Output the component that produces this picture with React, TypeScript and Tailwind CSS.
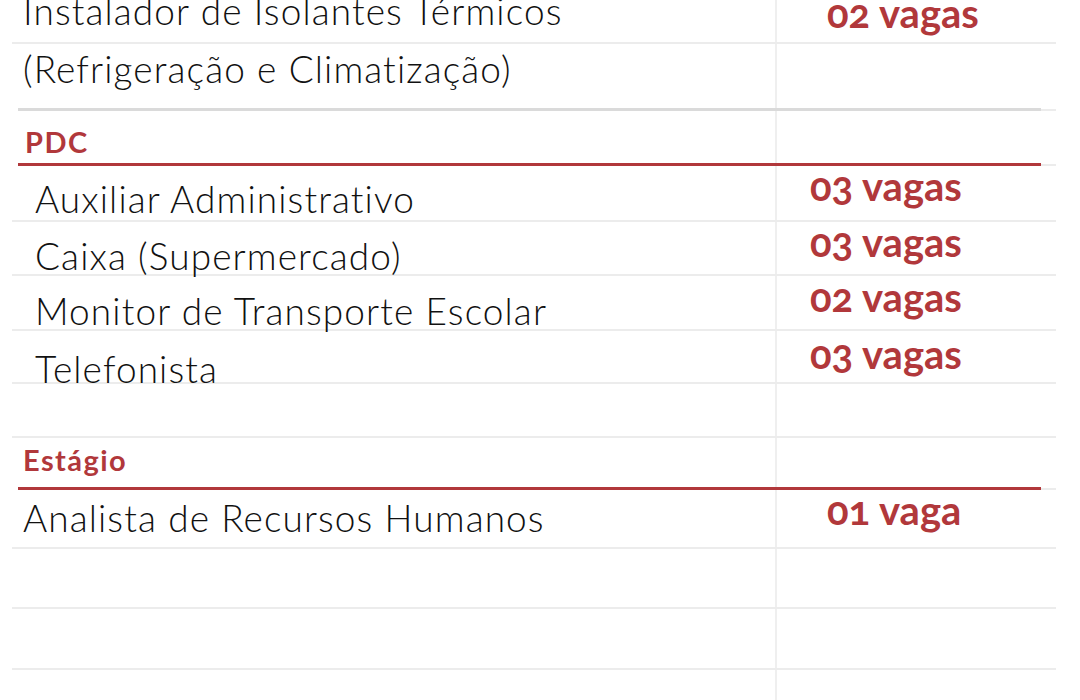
const RED = 'text-[#b1383b]';

interface RowProps {
  h: string;
  children?: React.ReactNode;
  right?: React.ReactNode;
  last?: boolean;
}

function Row({ h, children, right, last }: RowProps) {
  return (
    <div className={`flex ${h} ${last ? '' : 'border-b-2 border-[#ececec]'}`}>
      <div className="w-[763px]">{children}</div>
      <div className="flex-1 border-l-2 border-[#efefef]">{right}</div>
    </div>
  );
}

function Rule({ red }: { red?: boolean }) {
  return (
    <div className="flex h-[3px] items-center">
      <div className={`ml-[6px] h-[3px] w-[1023px] ${red ? 'bg-[#b1383b]' : 'bg-[#dadada]'}`} />
      <div className="h-[2px] flex-1 bg-[#ececec]" />
    </div>
  );
}

function Job({ text, pt, pl }: { text: string; pt: string; pl: string }) {
  return (
    <p className={`${pt} ${pl} text-[37px] leading-none font-light tracking-[0.03em] whitespace-nowrap text-[#111]`}>
      {text}
    </p>
  );
}

function Vagas({ text, pt, pl }: { text: string; pt: string; pl: string }) {
  return (
    <p className={`${pt} ${pl} text-[40px] leading-none font-bold oldstyle-nums whitespace-nowrap ${RED}`}>
      {text}
    </p>
  );
}

function Heading({ text, pt, pl }: { text: string; pt: string; pl: string }) {
  return (
    <p className={`${pt} ${pl} text-[29px] leading-none font-bold tracking-[0.05em] ${RED}`}>{text}</p>
  );
}

export default function App() {
  return (
    <div className="h-[700px] w-[1080px] overflow-hidden bg-white font-['Lato',sans-serif]">
      <div className="-mt-[10px] ml-[12px] w-[1044px]">
        <Row h="h-[54px]" right={<Vagas text="02 vagas" pt="pt-[3px]" pl="pl-[50px]" />}>
          <Job text="Instalador de Isolantes Térmicos" pt="pt-[2px]" pl="pl-[11px]" />
        </Row>
        <Row h="h-[64px]" last>
          <Job text="(Refrigeração e Climatização)" pt="pt-[6px]" pl="pl-[11px]" />
        </Row>
        <Rule />

        <Row h="h-[52px]" last>
          <Heading text="PDC" pt="pt-[16px]" pl="pl-[13px]" />
        </Row>
        <Rule red />

        <Row h="h-[56px]" right={<Vagas text="03 vagas" pt="pt-0" pl="pl-[33px]" />}>
          <Job text="Auxiliar Administrativo" pt="pt-[14px]" pl="pl-[23px]" />
        </Row>
        <Row h="h-[54px]" right={<Vagas text="03 vagas" pt="pt-0" pl="pl-[33px]" />}>
          <Job text="Caixa (Supermercado)" pt="pt-[15px]" pl="pl-[23px]" />
        </Row>
        <Row h="h-[55px]" right={<Vagas text="02 vagas" pt="pt-[1px]" pl="pl-[33px]" />}>
          <Job text="Monitor de Transporte Escolar" pt="pt-[16px]" pl="pl-[23px]" />
        </Row>
        <Row h="h-[53px]" right={<Vagas text="03 vagas" pt="pt-[3px]" pl="pl-[33px]" />}>
          <Job text="Telefonista" pt="pt-[19px]" pl="pl-[23px]" />
        </Row>
        <Row h="h-[54px]" />

        <Row h="h-[49px]" last>
          <Heading text="Estágio" pt="pt-[7px]" pl="pl-[11px]" />
        </Row>
        <Rule red />

        <Row h="h-[59px]" right={<Vagas text="01 vaga" pt="pt-0" pl="pl-[50px]" />}>
          <Job text="Analista de Recursos Humanos" pt="pt-[9px]" pl="pl-[11px]" />
        </Row>
        <Row h="h-[60px]" />
        <Row h="h-[61px]" />
        <Row h="h-[60px]" last />
      </div>
    </div>
  );
}
